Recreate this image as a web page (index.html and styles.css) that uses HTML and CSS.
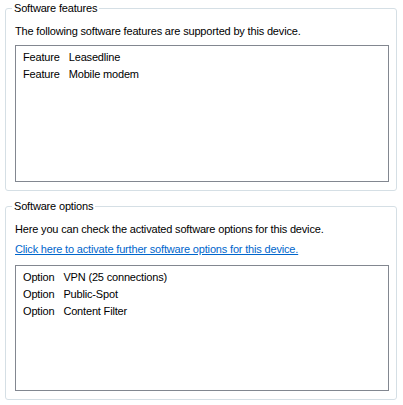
FILE: index.html
```html
<!DOCTYPE html>
<html>
<head>
<meta charset="utf-8">
<link rel="stylesheet" href="styles.css">
</head>
<body>
<fieldset class="group">
  <legend class="group-title">Software features</legend>
  <p class="desc">The following software features are supported by this device.</p>
  <div class="listbox listbox-features">
    <div class="list-grid">
      <span>Feature</span><span>Leasedline</span>
      <span>Feature</span><span>Mobile modem</span>
    </div>
  </div>
</fieldset>
<fieldset class="group group-options">
  <legend class="group-title">Software options</legend>
  <p class="desc">Here you can check the activated software options for this device.</p>
  <p class="link-line"><a class="link" href="#">Click here to activate further software options for this device.</a></p>
  <div class="listbox listbox-options">
    <div class="list-grid">
      <span>Option</span><span>VPN (25 connections)</span>
      <span>Option</span><span>Public-Spot</span>
      <span>Option</span><span>Content Filter</span>
    </div>
  </div>
</fieldset>
</body>
</html>
```

FILE: styles.css
```css
html, body {
  background: #ffffff;
}
body {
  margin: 2px 6px 0 5px;
  font-family: "Liberation Sans", Arial, sans-serif;
  font-size: 11px;
  letter-spacing: -0.17px;
  color: #000000;
}
.group {
  margin: 0;
  border: 1px solid #d5dfe5;
  border-radius: 3px;
  padding: 9px 7px 8px 9px;
  min-width: 0;
}
.group-options {
  margin-top: 9px;
}
.group-title {
  padding: 0 2px;
  margin-left: -3px;
  line-height: 13px;
}
.desc {
  margin: 0;
  line-height: 14px;
}
.link-line {
  margin: 6px 0 0 0;
  line-height: 14px;
}
.link {
  color: #0066cc;
  text-decoration: underline;
}
.listbox {
  box-sizing: border-box;
  border: 1px solid #828790;
  background: #ffffff;
  padding: 3px 7px 2px 7px;
  margin-top: 7px;
}
.listbox-features {
  height: 137px;
}
.listbox-options {
  height: 126px;
  margin-top: 9px;
}
.list-grid {
  display: grid;
  grid-template-columns: auto 1fr;
  column-gap: 9px;
  line-height: 17px;
}
```
